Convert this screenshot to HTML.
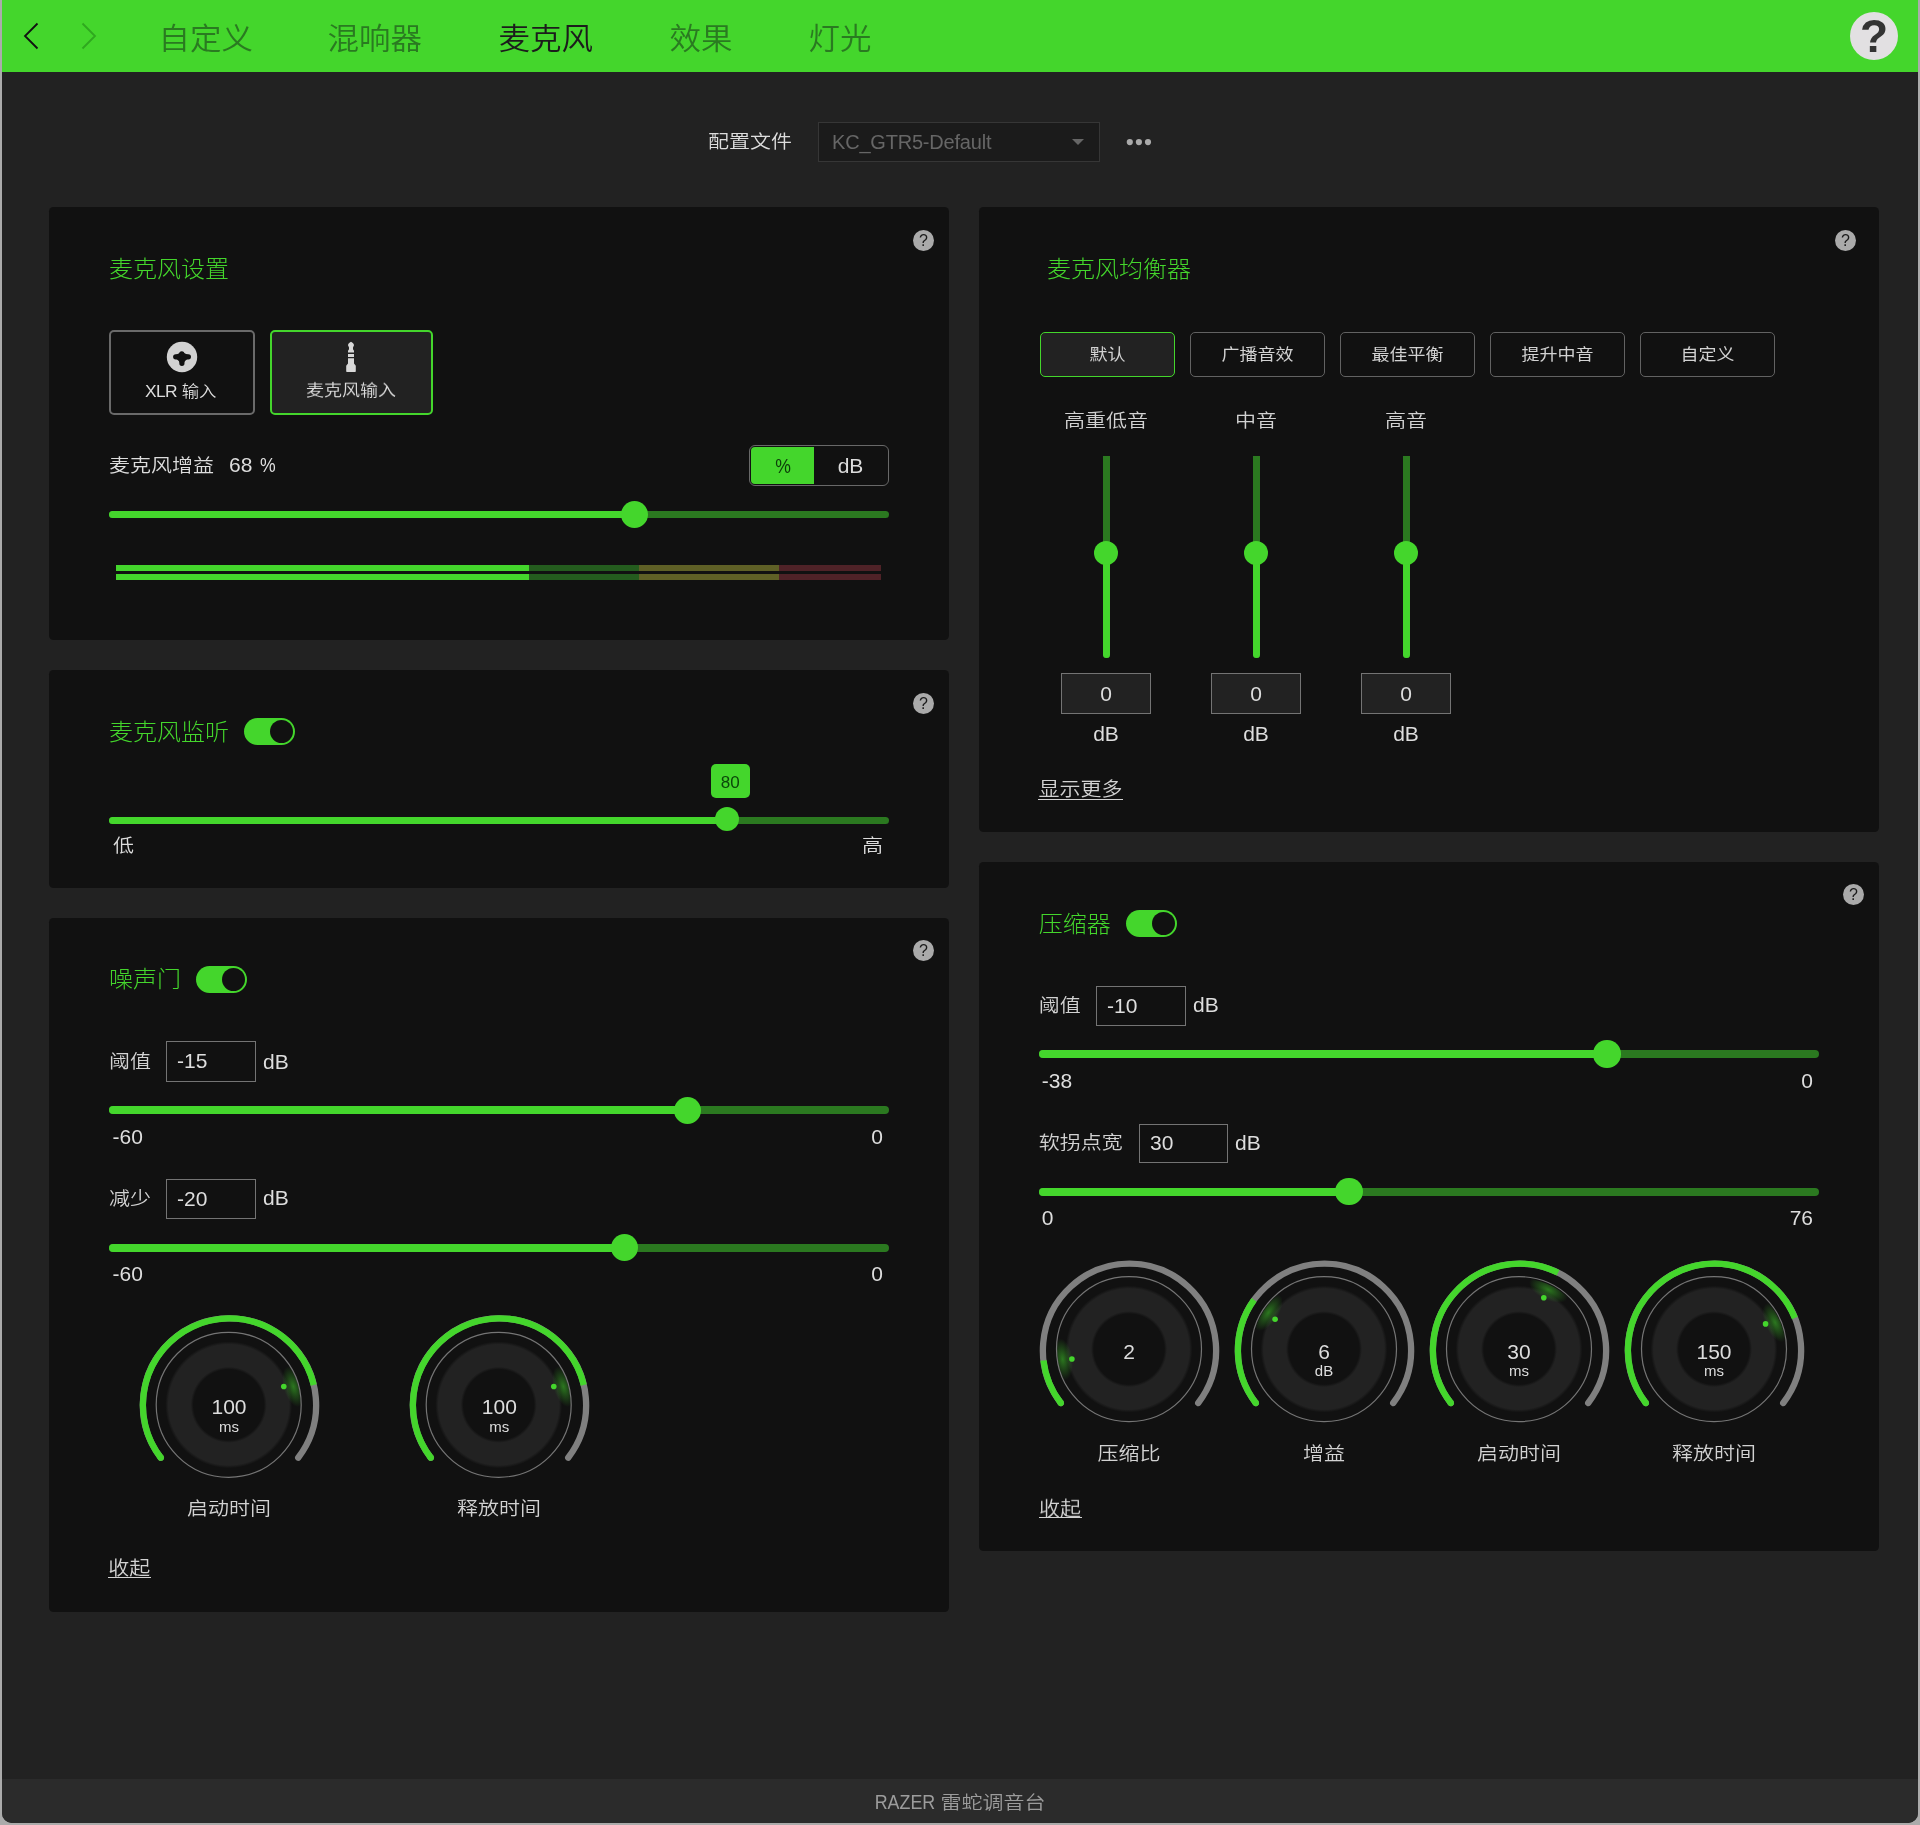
<!DOCTYPE html>
<html lang="zh-CN"><head><meta charset="utf-8"><title>RAZER 雷蛇调音台</title>
<style>
*{box-sizing:border-box;margin:0;padding:0}
html,body{width:1920px;height:1825px;overflow:hidden;background:#ababab}
body{font-family:"Liberation Sans","Noto Sans CJK SC",sans-serif;position:relative;font-weight:350}
#win{position:absolute;left:2px;top:0;width:1916px;height:1823px;background:#222;border-radius:0 0 10px 10px;overflow:hidden}
#in{position:absolute;left:-2px;top:0;width:1920px;height:1825px;will-change:transform}
.t{position:absolute;white-space:nowrap}
.c{display:inline-block}
.panel{position:absolute;background:#111;border-radius:4.5px}
.hq{position:absolute;width:21px;height:21px;border-radius:50%;background:#aaa;color:#1a1a1a;font-size:16px;line-height:21px;text-align:center}
.inp{position:absolute;width:90px;height:41px;border:1px solid #747474;color:#dedede;font-size:21px;line-height:39px}
.btn{position:absolute;border-radius:5px;text-align:center;color:#ddd;font-size:18px}
.u{text-decoration:none}
</style></head><body><div id="win"><div id="in">
<svg width="0" height="0" style="position:absolute"><defs>
<radialGradient id="kglow"><stop offset="0" stop-color="#44d62c" stop-opacity="0.52"/><stop offset="0.5" stop-color="#44d62c" stop-opacity="0.25"/><stop offset="1" stop-color="#44d62c" stop-opacity="0"/></radialGradient>
<radialGradient id="kdisc"><stop offset="0" stop-color="#111"/><stop offset="0.55" stop-color="#111"/><stop offset="0.594" stop-color="#222"/><stop offset="0.942" stop-color="#222"/><stop offset="0.99" stop-color="#222" stop-opacity="0"/><stop offset="1" stop-color="#222" stop-opacity="0"/></radialGradient>
<clipPath id="kclip"><circle cx="100" cy="100" r="72"/></clipPath>
</defs></svg>

<div style="position:absolute;left:0px;top:0px;width:1920px;height:72px;background:#44d62c;"></div>
<svg style="position:absolute;left:0;top:0" width="120" height="72" viewBox="0 0 120 72"><path d="M37.5,23.5 L25,36 L37.5,48.5" fill="none" stroke="#111" stroke-width="1.8"/><path d="M82.5,23.5 L95,36 L82.5,48.5" fill="none" stroke="#2fa81f" stroke-width="1.8"/></svg>
<div class="t " style="left:158.5px;top:13.5px;height:50px;line-height:50px;font-size:31.5px;color:#2a7a21;font-weight:350;"><span class="c" style="transform:translateY(-0.9px) scaleY(0.95)">自定义</span></div>
<div class="t " style="left:327.5px;top:13.5px;height:50px;line-height:50px;font-size:31.5px;color:#2a7a21;font-weight:350;"><span class="c" style="transform:translateY(-0.9px) scaleY(0.95)">混响器</span></div>
<div class="t " style="left:498.5px;top:13.5px;height:50px;line-height:50px;font-size:31.5px;color:#1c1c1c;font-weight:350;"><span class="c" style="transform:translateY(-0.9px) scaleY(0.95)">麦克风</span></div>
<div class="t " style="left:669.5px;top:13.5px;height:50px;line-height:50px;font-size:31.5px;color:#2a7a21;font-weight:350;"><span class="c" style="transform:translateY(-0.9px) scaleY(0.95)">效果</span></div>
<div class="t " style="left:808.5px;top:13.5px;height:50px;line-height:50px;font-size:31.5px;color:#2a7a21;font-weight:350;"><span class="c" style="transform:translateY(-0.9px) scaleY(0.95)">灯光</span></div>
<div style="position:absolute;left:1850px;top:12px;width:48px;height:48px;border-radius:50%;background:#e2e0e2;color:#333;font-weight:700;font-size:46px;line-height:49px;text-align:center">?</div>
<div class="t " style="left:708px;top:124.0px;height:34px;line-height:34px;font-size:21px;color:#ddd;font-weight:350;"><span class="c" style="transform:translateY(0.6px) scaleY(0.89)">配置文件</span></div>
<div style="position:absolute;left:818px;top:122px;width:282px;height:40px;background:#1b1b1b;border:1px solid #363636;"></div>
<div class="t " style="left:832px;top:126.0px;height:32px;line-height:32px;font-size:20px;color:#666;font-weight:350;letter-spacing:-0.2px;">KC_GTR5-Default</div>
<svg style="position:absolute;left:1070px;top:136px" width="16" height="12"><path d="M2,3 L14,3 L8,9 Z" fill="#666"/></svg>
<svg style="position:absolute;left:1124px;top:136px" width="32" height="12"><circle cx="5.8" cy="6.1" r="3.1" fill="#aaa"/><circle cx="14.9" cy="6.1" r="3.1" fill="#aaa"/><circle cx="24" cy="6.1" r="3.1" fill="#aaa"/></svg>
<div class="panel" style="left:49px;top:207px;width:900px;height:433px"></div>
<div class="panel" style="left:49px;top:670px;width:900px;height:218px"></div>
<div class="panel" style="left:49px;top:918px;width:900px;height:694px"></div>
<div class="panel" style="left:979px;top:207px;width:900px;height:625px"></div>
<div class="panel" style="left:979px;top:862px;width:900px;height:689px"></div>
<div class="t " style="left:109px;top:250.0px;height:38px;line-height:38px;font-size:24px;color:#44d62c;font-weight:300;"><span class="c" style="transform:translateY(0.4px) scaleY(0.95)">麦克风设置</span></div>
<div class="hq" style="left:913.0px;top:230.0px;">?</div>
<div class="btn" style="left:109px;top:330px;width:146px;height:85px;border:2px solid #6a6a6a;background:#111"></div>
<div class="btn" style="left:270px;top:330px;width:163px;height:85px;border:2px solid #44d62c;background:#222"></div>
<svg style="position:absolute;left:162px;top:337px" width="40" height="40" viewBox="162 337 40 40"><circle cx="182" cy="357" r="15.2" fill="#d2d2d2"/><g stroke="#111" stroke-width="5.2" stroke-linecap="round" stroke-linejoin="round" fill="#111"><line x1="175.7" y1="356.8" x2="188.4" y2="356.8"/><line x1="181.8" y1="353.8" x2="181.9" y2="363.3"/><path d="M176.5,356.5 L181.8,353.8 L187.5,356.5 L183.6,360 L181.9,362.5 L180.2,360 Z" stroke-width="3.5"/></g></svg>
<svg style="position:absolute;left:331px;top:337px" width="40" height="40" viewBox="331 337 40 40"><g fill="#d8d8d8"><path d="M351,341.8 C352.6,342.6 354,343.9 354,345.2 L353,347.4 L353,349.2 L354,350.8 L354,352.4 L348,352.4 L348,350.8 L349,349.2 L349,347.4 L348,345.2 C348,343.9 349.4,342.6 351,341.8 Z"/><rect x="348" y="354" width="6" height="3"/><path d="M348,358.3 L354,358.3 L354,363.4 L355.8,365.8 L355.8,371.2 Q355.8,371.9 355.1,371.9 L346.9,371.9 Q346.2,371.9 346.2,371.2 L346.2,365.8 L348,363.4 Z"/></g></svg>
<div class="t " style="left:180.8px;transform:translateX(-50%);top:377.0px;height:28px;line-height:28px;font-size:17.4px;color:#ddd;font-weight:350;"><span style="letter-spacing:-0.7px">XLR</span> <span class="c" style="transform:translateY(0.7px) scaleY(0.9)">输入</span></div>
<div class="t " style="left:351px;transform:translateX(-50%);top:376.1px;height:29px;line-height:29px;font-size:18px;color:#ddd;font-weight:350;"><span class="c" style="transform:translateY(0.7px) scaleY(0.9)">麦克风输入</span></div>
<div class="t " style="left:109px;top:448.0px;height:34px;line-height:34px;font-size:21px;color:#ddd;font-weight:350;"><span class="c" style="transform:translateY(0.6px) scaleY(0.89)">麦克风增益</span></div>
<div class="t " style="left:229px;top:448.0px;height:34px;line-height:34px;font-size:21px;color:#ddd;font-weight:350;">68</div>
<div class="t " style="left:259.5px;top:448.0px;height:34px;line-height:34px;font-size:21px;color:#dedede;font-weight:350;transform:scaleX(0.84);transform-origin:0 50%;">%</div>
<div style="position:absolute;left:749px;top:445px;width:140px;height:41px;border:1px solid #686868;border-radius:6px"></div>
<div style="position:absolute;left:751px;top:447px;width:63px;height:37px;background:#44d62c;border-radius:4px 0 0 4px;"></div>
<div class="t " style="left:782.8px;transform:translateX(-50%);top:448.5px;height:34px;line-height:34px;font-size:21px;color:#0d3d0a;font-weight:350;transform:translateX(-50%) scaleX(0.84);">%</div>
<div class="t " style="left:850.5px;transform:translateX(-50%);top:448.5px;height:34px;line-height:34px;font-size:21px;color:#ddd;font-weight:350;">dB</div>
<div style="position:absolute;left:109px;top:511px;width:780px;height:7px;background:#2b7920;border-radius:3.5px;"></div>
<div style="position:absolute;left:109px;top:511px;width:525.5px;height:7px;background:#44d62c;border-radius:3.5px 0 0 3.5px;"></div>
<div style="position:absolute;left:621.0px;top:501.0px;width:27px;height:27px;background:#44d62c;border-radius:50%;"></div>
<div style="position:absolute;left:116px;top:565px;width:413px;height:6px;background:#44d62c;"></div>
<div style="position:absolute;left:529px;top:565px;width:110px;height:6px;background:#245c1e;"></div>
<div style="position:absolute;left:639px;top:565px;width:140px;height:6px;background:#5f6026;"></div>
<div style="position:absolute;left:779px;top:565px;width:102px;height:6px;background:#4f2227;"></div>
<div style="position:absolute;left:116px;top:574px;width:413px;height:6px;background:#44d62c;"></div>
<div style="position:absolute;left:529px;top:574px;width:110px;height:6px;background:#245c1e;"></div>
<div style="position:absolute;left:639px;top:574px;width:140px;height:6px;background:#5f6026;"></div>
<div style="position:absolute;left:779px;top:574px;width:102px;height:6px;background:#4f2227;"></div>
<div class="t " style="left:109px;top:713.0px;height:38px;line-height:38px;font-size:24px;color:#44d62c;font-weight:300;"><span class="c" style="transform:translateY(0.4px) scaleY(0.95)">麦克风监听</span></div>
<div style="position:absolute;left:244px;top:718px;width:51px;height:27px;border-radius:14px;background:#44d62c;"><div style="position:absolute;right:2px;top:2px;width:23px;height:23px;border-radius:50%;background:#111;"></div></div>
<div class="hq" style="left:913.0px;top:693.0px;">?</div>
<div style="position:absolute;left:711px;top:764px;width:39px;height:34px;background:#44d62c;border-radius:5px;"></div>
<div class="t " style="left:730.3px;transform:translateX(-50%);top:769.3px;height:27px;line-height:27px;font-size:17px;color:#0b470a;font-weight:350;">80</div>
<div style="position:absolute;left:109px;top:817px;width:780px;height:7px;background:#2b7920;border-radius:3.5px;"></div>
<div style="position:absolute;left:109px;top:817px;width:618.3px;height:7px;background:#44d62c;border-radius:3.5px 0 0 3.5px;"></div>
<div style="position:absolute;left:715.3px;top:807.0px;width:24px;height:24px;background:#44d62c;border-radius:50%;"></div>
<div class="t " style="left:113px;top:828.0px;height:34px;line-height:34px;font-size:21px;color:#ddd;font-weight:350;"><span class="c" style="transform:translateY(0.6px) scaleY(0.89)">低</span></div>
<div class="t " style="right:1037px;top:828.0px;height:34px;line-height:34px;font-size:21px;color:#ddd;font-weight:350;"><span class="c" style="transform:translateY(0.6px) scaleY(0.89)">高</span></div>
<div class="t " style="left:109px;top:960.0px;height:38px;line-height:38px;font-size:24px;color:#44d62c;font-weight:300;"><span class="c" style="transform:translateY(0.4px) scaleY(0.95)">噪声门</span></div>
<div style="position:absolute;left:196px;top:966px;width:51px;height:27px;border-radius:14px;background:#44d62c;"><div style="position:absolute;right:2px;top:2px;width:23px;height:23px;border-radius:50%;background:#111;"></div></div>
<div class="hq" style="left:913.0px;top:940.0px;">?</div>
<div class="t " style="left:109px;top:1044.0px;height:34px;line-height:34px;font-size:21px;color:#d2d2d2;font-weight:350;"><span class="c" style="transform:translateY(0.6px) scaleY(0.89)">阈值</span></div>
<div class="inp" style="left:166px;top:1041px;width:90px;height:41px;line-height:38px;background:#111;padding-left:10px;">-15</div>
<div class="t " style="left:263px;top:1044.6px;height:34px;line-height:34px;font-size:21px;color:#dedede;font-weight:350;">dB</div>
<div style="position:absolute;left:109px;top:1105.9px;width:780px;height:8.4px;background:#2b7920;border-radius:4.2px;"></div>
<div style="position:absolute;left:109px;top:1105.9px;width:578.4px;height:8.4px;background:#44d62c;border-radius:4.2px 0 0 4.2px;"></div>
<div style="position:absolute;left:673.65px;top:1096.65px;width:27.5px;height:27.5px;background:#44d62c;border-radius:50%;"></div>
<div class="t " style="left:112.5px;top:1119.8px;height:34px;line-height:34px;font-size:21px;color:#dedede;font-weight:350;">-60</div>
<div class="t " style="right:1037px;top:1119.8px;height:34px;line-height:34px;font-size:21px;color:#dedede;font-weight:350;">0</div>
<div class="t " style="left:109px;top:1181.0px;height:34px;line-height:34px;font-size:21px;color:#d2d2d2;font-weight:350;"><span class="c" style="transform:translateY(0.6px) scaleY(0.89)">减少</span></div>
<div class="inp" style="left:166px;top:1179px;width:90px;height:40px;line-height:37px;background:#111;padding-left:10px;">-20</div>
<div class="t " style="left:263px;top:1181.4px;height:34px;line-height:34px;font-size:21px;color:#dedede;font-weight:350;">dB</div>
<div style="position:absolute;left:109px;top:1243.8px;width:780px;height:8.3px;background:#2b7920;border-radius:4.15px;"></div>
<div style="position:absolute;left:109px;top:1243.8px;width:515.4px;height:8.3px;background:#44d62c;border-radius:4.15px 0 0 4.15px;"></div>
<div style="position:absolute;left:610.65px;top:1233.95px;width:27.5px;height:27.5px;background:#44d62c;border-radius:50%;"></div>
<div class="t " style="left:112.5px;top:1256.8px;height:34px;line-height:34px;font-size:21px;color:#dedede;font-weight:350;">-60</div>
<div class="t " style="right:1037px;top:1256.8px;height:34px;line-height:34px;font-size:21px;color:#dedede;font-weight:350;">0</div>
<svg style="position:absolute;left:129px;top:1305.4px" width="200" height="200" viewBox="0 0 200 200"><path d="M31.80,152.72 A86.6,86.6 0 1 1 169.20,152.72" fill="none" stroke="#808080" stroke-width="6.3" stroke-linecap="round"/><circle cx="31.80" cy="152.72" r="3.15" fill="#44d62c"/><path d="M31.80,152.72 A86.6,86.6 0 1 1 184.75,79.97" fill="none" stroke="#44d62c" stroke-width="6.3"/><circle cx="99.7" cy="99.8" r="64" fill="url(#kdisc)"/><g clip-path="url(#kclip)"><ellipse cx="167" cy="100" rx="10" ry="21" fill="url(#kglow)" transform="rotate(344.05 100 100)"/></g><circle cx="99.7" cy="99.8" r="72.5" fill="none" stroke="#757575" stroke-width="1.2"/><circle cx="154.78" cy="81.56" r="2.8" fill="#44d62c"/></svg>
<div class="t kn" style="left:229px;transform:translateX(-50%);top:1390.1000000000001px;height:34px;line-height:34px;font-size:21px;color:#ddd;font-weight:350;">100</div>
<div class="t kn" style="left:229px;transform:translateX(-50%);top:1414.6000000000001px;height:24px;line-height:24px;font-size:15px;color:#ddd;font-weight:350;">ms</div>
<svg style="position:absolute;left:399.3px;top:1305.4px" width="200" height="200" viewBox="0 0 200 200"><path d="M31.80,152.72 A86.6,86.6 0 1 1 169.20,152.72" fill="none" stroke="#808080" stroke-width="6.3" stroke-linecap="round"/><circle cx="31.80" cy="152.72" r="3.15" fill="#44d62c"/><path d="M31.80,152.72 A86.6,86.6 0 1 1 184.75,79.97" fill="none" stroke="#44d62c" stroke-width="6.3"/><circle cx="99.7" cy="99.8" r="64" fill="url(#kdisc)"/><g clip-path="url(#kclip)"><ellipse cx="167" cy="100" rx="10" ry="21" fill="url(#kglow)" transform="rotate(344.05 100 100)"/></g><circle cx="99.7" cy="99.8" r="72.5" fill="none" stroke="#757575" stroke-width="1.2"/><circle cx="154.78" cy="81.56" r="2.8" fill="#44d62c"/></svg>
<div class="t kn" style="left:499.3px;transform:translateX(-50%);top:1390.1000000000001px;height:34px;line-height:34px;font-size:21px;color:#ddd;font-weight:350;">100</div>
<div class="t kn" style="left:499.3px;transform:translateX(-50%);top:1414.6000000000001px;height:24px;line-height:24px;font-size:15px;color:#ddd;font-weight:350;">ms</div>
<div class="t " style="left:229px;transform:translateX(-50%);top:1490.9px;height:34px;line-height:34px;font-size:21px;color:#d2d2d2;font-weight:350;"><span class="c" style="transform:translateY(0.6px) scaleY(0.89)">启动时间</span></div>
<div class="t " style="left:499px;transform:translateX(-50%);top:1490.9px;height:34px;line-height:34px;font-size:21px;color:#d2d2d2;font-weight:350;"><span class="c" style="transform:translateY(0.6px) scaleY(0.89)">释放时间</span></div>
<div style="position:absolute;left:108.3px;top:1576.8px;width:42.6px;height:1.2px;background:#d2d2d2;"></div>
<div class="t u" style="left:108.3px;top:1550.5px;height:34px;line-height:34px;font-size:21px;color:#d2d2d2;font-weight:350;"><span class="c" style="transform:translateY(0.6px) scaleY(0.93)">收起</span></div>
<div class="t " style="left:1047px;top:250.0px;height:38px;line-height:38px;font-size:24px;color:#44d62c;font-weight:300;"><span class="c" style="transform:translateY(0.4px) scaleY(0.95)">麦克风均衡器</span></div>
<div class="hq" style="left:1835.0px;top:230.0px;">?</div>
<div class="btn" style="left:1040px;top:332px;width:135px;height:45px;border:1.5px solid #44d62c;background:#222"></div>
<div class="t " style="left:1107.5px;transform:translateX(-50%);top:339.5px;height:29px;line-height:29px;font-size:18px;color:#d2d2d2;font-weight:400;"><span class="c" style="transform:translateY(0.7px) scaleY(0.9)">默认</span></div>
<div class="btn" style="left:1190px;top:332px;width:135px;height:45px;border:1px solid #626262"></div>
<div class="t " style="left:1257.5px;transform:translateX(-50%);top:339.5px;height:29px;line-height:29px;font-size:18px;color:#d2d2d2;font-weight:400;"><span class="c" style="transform:translateY(0.7px) scaleY(0.9)">广播音效</span></div>
<div class="btn" style="left:1340px;top:332px;width:135px;height:45px;border:1px solid #626262"></div>
<div class="t " style="left:1407.5px;transform:translateX(-50%);top:339.5px;height:29px;line-height:29px;font-size:18px;color:#d2d2d2;font-weight:400;"><span class="c" style="transform:translateY(0.7px) scaleY(0.9)">最佳平衡</span></div>
<div class="btn" style="left:1490px;top:332px;width:135px;height:45px;border:1px solid #626262"></div>
<div class="t " style="left:1557.5px;transform:translateX(-50%);top:339.5px;height:29px;line-height:29px;font-size:18px;color:#d2d2d2;font-weight:400;"><span class="c" style="transform:translateY(0.7px) scaleY(0.9)">提升中音</span></div>
<div class="btn" style="left:1640px;top:332px;width:135px;height:45px;border:1px solid #626262"></div>
<div class="t " style="left:1707.5px;transform:translateX(-50%);top:339.5px;height:29px;line-height:29px;font-size:18px;color:#d2d2d2;font-weight:400;"><span class="c" style="transform:translateY(0.7px) scaleY(0.9)">自定义</span></div>
<div class="t " style="left:1106px;transform:translateX(-50%);top:403.0px;height:34px;line-height:34px;font-size:21px;color:#d2d2d2;font-weight:350;"><span class="c" style="transform:translateY(0.6px) scaleY(0.89)">高重低音</span></div>
<div style="position:absolute;left:1103px;top:456px;width:7px;height:202px;background:#2b7920;border-radius:0 0 3.5px 3.5px;"></div>
<div style="position:absolute;left:1103px;top:553px;width:7px;height:105px;background:#44d62c;border-radius:0 0 3.5px 3.5px;"></div>
<div style="position:absolute;left:1094px;top:541px;width:24px;height:24px;background:#44d62c;border-radius:50%;"></div>
<div class="inp" style="left:1061px;top:673px;width:90px;height:41px;line-height:40px;background:#222;text-align:center;">0</div>
<div class="t " style="left:1106px;transform:translateX(-50%);top:716.5px;height:34px;line-height:34px;font-size:21px;color:#dedede;font-weight:350;">dB</div>
<div class="t " style="left:1256px;transform:translateX(-50%);top:403.0px;height:34px;line-height:34px;font-size:21px;color:#d2d2d2;font-weight:350;"><span class="c" style="transform:translateY(0.6px) scaleY(0.89)">中音</span></div>
<div style="position:absolute;left:1253px;top:456px;width:7px;height:202px;background:#2b7920;border-radius:0 0 3.5px 3.5px;"></div>
<div style="position:absolute;left:1253px;top:553px;width:7px;height:105px;background:#44d62c;border-radius:0 0 3.5px 3.5px;"></div>
<div style="position:absolute;left:1244px;top:541px;width:24px;height:24px;background:#44d62c;border-radius:50%;"></div>
<div class="inp" style="left:1211px;top:673px;width:90px;height:41px;line-height:40px;background:#222;text-align:center;">0</div>
<div class="t " style="left:1256px;transform:translateX(-50%);top:716.5px;height:34px;line-height:34px;font-size:21px;color:#dedede;font-weight:350;">dB</div>
<div class="t " style="left:1406px;transform:translateX(-50%);top:403.0px;height:34px;line-height:34px;font-size:21px;color:#d2d2d2;font-weight:350;"><span class="c" style="transform:translateY(0.6px) scaleY(0.89)">高音</span></div>
<div style="position:absolute;left:1403px;top:456px;width:7px;height:202px;background:#2b7920;border-radius:0 0 3.5px 3.5px;"></div>
<div style="position:absolute;left:1403px;top:553px;width:7px;height:105px;background:#44d62c;border-radius:0 0 3.5px 3.5px;"></div>
<div style="position:absolute;left:1394px;top:541px;width:24px;height:24px;background:#44d62c;border-radius:50%;"></div>
<div class="inp" style="left:1361px;top:673px;width:90px;height:41px;line-height:40px;background:#222;text-align:center;">0</div>
<div class="t " style="left:1406px;transform:translateX(-50%);top:716.5px;height:34px;line-height:34px;font-size:21px;color:#dedede;font-weight:350;">dB</div>
<div style="position:absolute;left:1038.4px;top:798.5px;width:84.6px;height:1.2px;background:#d2d2d2;"></div>
<div class="t u" style="left:1038.4px;top:772.2px;height:34px;line-height:34px;font-size:21px;color:#d2d2d2;font-weight:350;"><span class="c" style="transform:translateY(0.6px) scaleY(0.93)">显示更多</span></div>
<div class="t " style="left:1038.8px;top:905.0px;height:38px;line-height:38px;font-size:24px;color:#44d62c;font-weight:300;"><span class="c" style="transform:translateY(0.4px) scaleY(0.95)">压缩器</span></div>
<div style="position:absolute;left:1126px;top:910px;width:51px;height:27px;border-radius:14px;background:#44d62c;"><div style="position:absolute;right:2px;top:2px;width:23px;height:23px;border-radius:50%;background:#111;"></div></div>
<div class="hq" style="left:1843.0px;top:884.0px;">?</div>
<div class="t " style="left:1038.8px;top:988.0px;height:34px;line-height:34px;font-size:21px;color:#d2d2d2;font-weight:350;"><span class="c" style="transform:translateY(0.6px) scaleY(0.89)">阈值</span></div>
<div class="inp" style="left:1096px;top:985.5px;width:90px;height:40px;line-height:38px;background:#111;padding-left:10px;">-10</div>
<div class="t " style="left:1193px;top:988.4px;height:34px;line-height:34px;font-size:21px;color:#dedede;font-weight:350;">dB</div>
<div style="position:absolute;left:1039px;top:1049.8px;width:779.7px;height:8.4px;background:#2b7920;border-radius:4.2px;"></div>
<div style="position:absolute;left:1039px;top:1049.8px;width:568px;height:8.4px;background:#44d62c;border-radius:4.2px 0 0 4.2px;"></div>
<div style="position:absolute;left:1593.25px;top:1040.25px;width:27.5px;height:27.5px;background:#44d62c;border-radius:50%;"></div>
<div class="t " style="left:1041.8px;top:1063.7px;height:34px;line-height:34px;font-size:21px;color:#dedede;font-weight:350;">-38</div>
<div class="t " style="right:107px;top:1063.7px;height:34px;line-height:34px;font-size:21px;color:#dedede;font-weight:350;">0</div>
<div class="t " style="left:1038.8px;top:1125.0px;height:34px;line-height:34px;font-size:21px;color:#d2d2d2;font-weight:350;"><span class="c" style="transform:translateY(0.6px) scaleY(0.89)">软拐点宽</span></div>
<div class="inp" style="left:1139px;top:1124px;width:89px;height:39px;line-height:35.5px;background:#111;padding-left:10px;">30</div>
<div class="t " style="left:1235px;top:1125.6px;height:34px;line-height:34px;font-size:21px;color:#dedede;font-weight:350;">dB</div>
<div style="position:absolute;left:1039px;top:1188.0px;width:779.7px;height:8.0px;background:#2b7920;border-radius:4.0px;"></div>
<div style="position:absolute;left:1039px;top:1188.0px;width:310px;height:8.0px;background:#44d62c;border-radius:4.0px 0 0 4.0px;"></div>
<div style="position:absolute;left:1335.25px;top:1177.95px;width:27.5px;height:27.5px;background:#44d62c;border-radius:50%;"></div>
<div class="t " style="left:1041.8px;top:1200.7px;height:34px;line-height:34px;font-size:21px;color:#dedede;font-weight:350;">0</div>
<div class="t " style="right:107px;top:1200.7px;height:34px;line-height:34px;font-size:21px;color:#dedede;font-weight:350;">76</div>
<svg style="position:absolute;left:1029px;top:1250px" width="200" height="200" viewBox="0 0 200 200"><path d="M31.80,153.02 A86.6,86.6 0 1 1 169.20,153.02" fill="none" stroke="#808080" stroke-width="6.3" stroke-linecap="round"/><circle cx="31.80" cy="153.02" r="3.15" fill="#44d62c"/><path d="M31.80,153.02 A86.6,86.6 0 0 1 14.50,110.50" fill="none" stroke="#44d62c" stroke-width="6.3"/><circle cx="100.0" cy="99.1" r="64" fill="url(#kdisc)"/><g clip-path="url(#kclip)"><ellipse cx="167" cy="100" rx="10" ry="21" fill="url(#kglow)" transform="rotate(172.05 100 100)"/></g><circle cx="100.0" cy="99.1" r="72.5" fill="none" stroke="#757575" stroke-width="1.2"/><circle cx="42.90" cy="108.94" r="2.8" fill="#44d62c"/></svg>
<div class="t kn" style="left:1129px;transform:translateX(-50%);top:1334.7px;height:34px;line-height:34px;font-size:21px;color:#ddd;font-weight:350;">2</div>
<svg style="position:absolute;left:1224px;top:1250px" width="200" height="200" viewBox="0 0 200 200"><path d="M31.80,153.02 A86.6,86.6 0 1 1 169.20,153.02" fill="none" stroke="#808080" stroke-width="6.3" stroke-linecap="round"/><circle cx="31.80" cy="153.02" r="3.15" fill="#44d62c"/><path d="M31.80,153.02 A86.6,86.6 0 0 1 30.06,49.93" fill="none" stroke="#44d62c" stroke-width="6.3"/><circle cx="100.0" cy="99.1" r="64" fill="url(#kdisc)"/><g clip-path="url(#kclip)"><ellipse cx="167" cy="100" rx="10" ry="21" fill="url(#kglow)" transform="rotate(213.90 100 100)"/></g><circle cx="100.0" cy="99.1" r="72.5" fill="none" stroke="#757575" stroke-width="1.2"/><circle cx="51.09" cy="69.20" r="2.8" fill="#44d62c"/></svg>
<div class="t kn" style="left:1324px;transform:translateX(-50%);top:1334.7px;height:34px;line-height:34px;font-size:21px;color:#ddd;font-weight:350;">6</div>
<div class="t kn" style="left:1324px;transform:translateX(-50%);top:1359.2px;height:24px;line-height:24px;font-size:15px;color:#ddd;font-weight:350;">dB</div>
<svg style="position:absolute;left:1419px;top:1250px" width="200" height="200" viewBox="0 0 200 200"><path d="M31.80,153.02 A86.6,86.6 0 1 1 169.20,153.02" fill="none" stroke="#808080" stroke-width="6.3" stroke-linecap="round"/><circle cx="31.80" cy="153.02" r="3.15" fill="#44d62c"/><path d="M31.80,153.02 A86.6,86.6 0 0 1 139.03,22.74" fill="none" stroke="#44d62c" stroke-width="6.3"/><circle cx="100.0" cy="99.1" r="64" fill="url(#kdisc)"/><g clip-path="url(#kclip)"><ellipse cx="167" cy="100" rx="10" ry="21" fill="url(#kglow)" transform="rotate(296.10 100 100)"/></g><circle cx="100.0" cy="99.1" r="72.5" fill="none" stroke="#757575" stroke-width="1.2"/><circle cx="124.79" cy="47.79" r="2.8" fill="#44d62c"/></svg>
<div class="t kn" style="left:1519px;transform:translateX(-50%);top:1334.7px;height:34px;line-height:34px;font-size:21px;color:#ddd;font-weight:350;">30</div>
<div class="t kn" style="left:1519px;transform:translateX(-50%);top:1359.2px;height:24px;line-height:24px;font-size:15px;color:#ddd;font-weight:350;">ms</div>
<svg style="position:absolute;left:1614px;top:1250px" width="200" height="200" viewBox="0 0 200 200"><path d="M31.80,153.02 A86.6,86.6 0 1 1 169.20,153.02" fill="none" stroke="#808080" stroke-width="6.3" stroke-linecap="round"/><circle cx="31.80" cy="153.02" r="3.15" fill="#44d62c"/><path d="M31.80,153.02 A86.6,86.6 0 1 1 180.85,67.99" fill="none" stroke="#44d62c" stroke-width="6.3"/><circle cx="100.0" cy="99.1" r="64" fill="url(#kdisc)"/><g clip-path="url(#kclip)"><ellipse cx="167" cy="100" rx="10" ry="21" fill="url(#kglow)" transform="rotate(335.77 100 100)"/></g><circle cx="100.0" cy="99.1" r="72.5" fill="none" stroke="#757575" stroke-width="1.2"/><circle cx="151.57" cy="73.89" r="2.8" fill="#44d62c"/></svg>
<div class="t kn" style="left:1714px;transform:translateX(-50%);top:1334.7px;height:34px;line-height:34px;font-size:21px;color:#ddd;font-weight:350;">150</div>
<div class="t kn" style="left:1714px;transform:translateX(-50%);top:1359.2px;height:24px;line-height:24px;font-size:15px;color:#ddd;font-weight:350;">ms</div>
<div class="t " style="left:1129px;transform:translateX(-50%);top:1435.9px;height:34px;line-height:34px;font-size:21px;color:#d2d2d2;font-weight:350;"><span class="c" style="transform:translateY(0.6px) scaleY(0.89)">压缩比</span></div>
<div class="t " style="left:1324px;transform:translateX(-50%);top:1435.9px;height:34px;line-height:34px;font-size:21px;color:#d2d2d2;font-weight:350;"><span class="c" style="transform:translateY(0.6px) scaleY(0.89)">增益</span></div>
<div class="t " style="left:1519px;transform:translateX(-50%);top:1435.9px;height:34px;line-height:34px;font-size:21px;color:#d2d2d2;font-weight:350;"><span class="c" style="transform:translateY(0.6px) scaleY(0.89)">启动时间</span></div>
<div class="t " style="left:1714px;transform:translateX(-50%);top:1435.9px;height:34px;line-height:34px;font-size:21px;color:#d2d2d2;font-weight:350;"><span class="c" style="transform:translateY(0.6px) scaleY(0.89)">释放时间</span></div>
<div style="position:absolute;left:1039.0px;top:1516.8px;width:42.6px;height:1.2px;background:#d2d2d2;"></div>
<div class="t u" style="left:1039.0px;top:1490.5px;height:34px;line-height:34px;font-size:21px;color:#d2d2d2;font-weight:350;"><span class="c" style="transform:translateY(0.6px) scaleY(0.93)">收起</span></div>
<div style="position:absolute;left:0px;top:1779px;width:1920px;height:46px;background:#2b2b2b;"></div>
<div class="t " style="right:985.2px;top:1784.5px;height:34px;line-height:34px;font-size:21px;color:#9c9c9c;font-weight:350;transform:scaleX(0.85);transform-origin:100% 50%;">RAZER</div>
<div class="t " style="left:940.5px;top:1784.5px;height:34px;line-height:34px;font-size:21px;color:#9c9c9c;font-weight:350;"><span class="c" style="transform:translateY(0.6px) scaleY(0.89)">雷蛇调音台</span></div>
</div></div></body></html>
